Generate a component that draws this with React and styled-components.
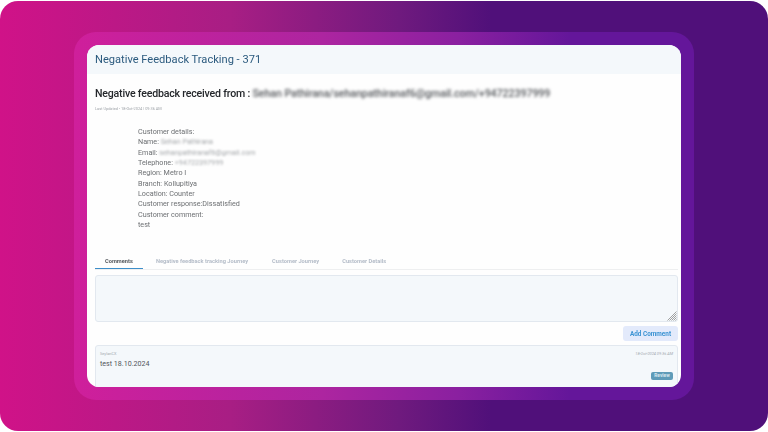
import React from "react";
import styled, { createGlobalStyle } from "styled-components";

const GlobalStyle = createGlobalStyle`
  html, body {
    margin: 0;
    padding: 0;
    background: #ffffff;
    font-family: Roboto, "Liberation Sans", sans-serif;
  }
`;

const Frame = styled.div`
  box-sizing: border-box;
  width: 768px;
  height: 430px;
  margin-top: 1px;
  padding: 31px 74px 0;
  border-radius: 18px;
  overflow: hidden;
  background: linear-gradient(90deg, #d01288 0%, #a81e84 30%, #6f1a7e 52%, #50107a 64%, #50107a 100%);
`;

const Ring = styled.div`
  box-sizing: border-box;
  width: 620px;
  height: 368px;
  padding: 13px;
  border-radius: 22px;
  background: linear-gradient(90deg, #cf1f9b 0%, #ad25a0 40%, #8a20a0 62%, #64169a 80%, #64169a 100%);
`;

const Card = styled.div`
  height: 342px;
  border-radius: 12px;
  overflow: hidden;
  background: #fefefe;
  display: flex;
  flex-direction: column;
  filter: blur(0.3px);
`;

const CardHeader = styled.div`
  height: 29px;
  flex: none;
  padding-left: 8px;
  display: flex;
  align-items: center;
  background: #f4f8fb;
`;

const Title = styled.h1`
  margin: 0;
  font-size: 11.1px;
  font-weight: 400;
  color: #2b5a7e;
`;

const Body = styled.div`
  flex: 1;
  padding: 13px 3px 0 8px;
  display: flex;
  flex-direction: column;
`;

const Headline = styled.div`
  font-size: 10.6px;
  line-height: 14px;
  font-weight: 500;
  letter-spacing: -0.2px;
  color: #24272b;
  white-space: nowrap;
`;

const Blurred = styled.span`
  filter: blur(${(p) => p.$amount || 1.6}px);
  color: ${(p) => p.$color || "inherit"};
  letter-spacing: ${(p) => p.$spacing || 0}px;
`;

const Updated = styled.div`
  margin-top: 5px;
  font-size: 3.9px;
  line-height: 5px;
  color: #a0a5aa;
`;

const Details = styled.div`
  margin: 16px 0 0 43px;
  height: 122px;
  font-size: 7.2px;
  line-height: 10.33px;
  color: #6c6f72;
`;

const DetailLine = styled.div`
  white-space: nowrap;
`;

const Tabs = styled.div`
  height: 20px;
  display: flex;
  border-bottom: 1px solid #eeeff0;
`;

const Tab = styled.div`
  box-sizing: border-box;
  height: 20px;
  padding: 4px ${(p) => (p.$active ? "10px" : "0")} 0;
  margin-right: ${(p) => p.$gap || 0}px;
  display: flex;
  align-items: center;
  font-size: 5.7px;
  font-weight: 700;
  white-space: nowrap;
  color: ${(p) => (p.$active ? "#55595e" : "#b4bcc8")};
  border-bottom: ${(p) => (p.$active ? "1px solid #3d8ec9" : "none")};
`;

const Editor = styled.div`
  position: relative;
  box-sizing: border-box;
  height: 47px;
  margin-top: 5px;
  background: #f4f8fb;
  border: 1px solid #e2e8ef;
  border-radius: 3px;
`;

const Grip = styled.svg`
  position: absolute;
  right: 0;
  bottom: 0;
`;

const Actions = styled.div`
  display: flex;
  justify-content: flex-end;
  padding: 4px 0;
`;

const AddButton = styled.button`
  box-sizing: border-box;
  width: 55px;
  height: 15px;
  padding: 0;
  border: none;
  border-radius: 3px;
  background: #e3eafb;
  color: #3b93d3;
  font-family: inherit;
  font-size: 6.4px;
  font-weight: 700;
`;

const Comment = styled.div`
  position: relative;
  box-sizing: border-box;
  height: 48px;
  margin-top: 0;
  padding: 5px 4px;
  background: #f4f8fb;
  border: 1px solid #e2e8ef;
  border-radius: 3px;
`;

const CommentMeta = styled.div`
  display: flex;
  justify-content: space-between;
  font-size: 3.9px;
  line-height: 5px;
  color: #a3a9b0;
`;

const CommentDate = styled.span`
  font-style: italic;
`;

const CommentText = styled.div`
  margin-top: 3px;
  font-size: 7.1px;
  line-height: 10px;
  color: #53575c;
`;

const Badge = styled.span`
  position: absolute;
  right: 4px;
  top: 26px;
  width: 22px;
  height: 8px;
  border-radius: 2px;
  background: #5f9bb8;
  color: #d9e8ef;
  font-size: 4.8px;
  font-weight: 700;
  line-height: 8px;
  text-align: center;
`;

const App = () => {
  return (
    <>
      <GlobalStyle />
      <Frame>
        <Ring>
          <Card>
            <CardHeader>
              <Title>Negative Feedback Tracking - 371</Title>
            </CardHeader>
            <Body>
              <Headline>
                Negative feedback received from :{" "}
                <Blurred $color="#55585c" $spacing={-0.05}>Sehan Pathirana/sehanpathiranaf6@gmail.com/+94722397999</Blurred>
              </Headline>
              <Updated>Last Updated - 18-Oct-2024 | 09:36 AM</Updated>
              <Details>
                <DetailLine>Customer details:</DetailLine>
                <DetailLine>
                  Name: <Blurred $amount={1.2} $color="#a5a8ab">Sehan Pathirana</Blurred>
                </DetailLine>
                <DetailLine>
                  Email: <Blurred $amount={1.2} $color="#a5a8ab">sehanpathiranaf6@gmail.com</Blurred>
                </DetailLine>
                <DetailLine>
                  Telephone: <Blurred $amount={1.2} $color="#a5a8ab">+94722397999</Blurred>
                </DetailLine>
                <DetailLine>Region: Metro I</DetailLine>
                <DetailLine>Branch: Kollupitiya</DetailLine>
                <DetailLine>Location: Counter</DetailLine>
                <DetailLine>Customer response:Dissatisfied</DetailLine>
                <DetailLine>Customer comment:</DetailLine>
                <DetailLine>test</DetailLine>
              </Details>
              <Tabs>
                <Tab $active $gap={13}>Comments</Tab>
                <Tab $gap={24}>Negative feedback tracking Journey</Tab>
                <Tab $gap={23}>Customer Journey</Tab>
                <Tab>Customer Details</Tab>
              </Tabs>
              <Editor>
                <Grip width="10" height="10" viewBox="0 0 10 10">
                  <path
                    d="M9.5 0.5 L0.5 9.5 M9.5 2.5 L2.5 9.5 M9.5 4.5 L4.5 9.5 M9.5 6.5 L6.5 9.5 M9.5 8.5 L8.5 9.5"
                    stroke="#8a8a8a"
                    strokeWidth="0.8"
                    fill="none"
                  />
                </Grip>
              </Editor>
              <Actions>
                <AddButton>Add Comment</AddButton>
              </Actions>
              <Comment>
                <CommentMeta>
                  <span>SeylanCX</span>
                  <CommentDate>18-Oct-2024 09:36 AM</CommentDate>
                </CommentMeta>
                <CommentText>test 18.10.2024</CommentText>
                <Badge>Review</Badge>
              </Comment>
            </Body>
          </Card>
        </Ring>
      </Frame>
    </>
  );
};

export default App;
